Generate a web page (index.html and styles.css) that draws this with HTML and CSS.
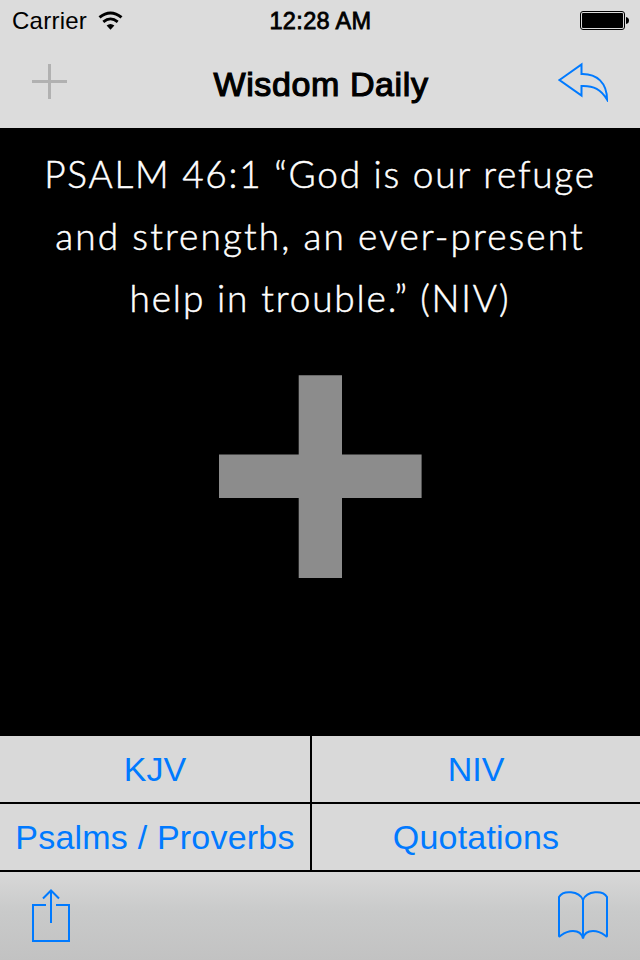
FILE: index.html
```html
<!DOCTYPE html>
<html lang="en">
<head>
  <meta charset="UTF-8">
  <meta name="viewport" content="width=device-width, initial-scale=1">
  <title>Wisdom Daily</title>
  <link rel="stylesheet" href="styles.css">
</head>
<body>
  <div class="app">
    <div class="status-bar">
      <div class="network">
        <span class="carrier">Carrier</span>
        <svg class="wifi" width="26" height="20" viewBox="0 0 26 20">
          <path d="M1.5 6.4Q12.5 -2.5 23.5 6.4" fill="none" stroke="#000" stroke-width="3"/>
          <path d="M5.3 10.9Q12.5 4.8 19.7 10.9" fill="none" stroke="#000" stroke-width="2.8"/>
          <path d="M8.6 14.6Q12.5 11.5 16.4 14.6L12.5 18.8Z"/>
        </svg>
      </div>
      <span class="time">12:28 AM</span>
      <svg class="battery" width="50" height="20" viewBox="0 0 50 20">
        <rect x="0.5" y="0.5" width="44" height="18" rx="2.5" fill="none" stroke="#000"/>
        <rect x="2" y="2" width="41" height="15" rx="1"/>
        <path d="M46 6Q49 6.5 49 9.5Q49 12.5 46 13Z"/>
      </svg>
    </div>

    <header class="nav-bar">
      <button class="icon-button" disabled aria-label="Add">
        <svg width="35" height="35" viewBox="0 0 35 35">
          <path d="M16 0h3v16h16v3H19v16h-3V19H0v-3h16z" fill="#b1b1b1"/>
        </svg>
      </button>
      <h1>Wisdom Daily</h1>
      <button class="icon-button" aria-label="Back">
        <svg width="52" height="40" viewBox="0 0 52 40">
          <path d="M1.5 18L23.5 2.5V12C39 11.5 49 21 49 37.5C43 27.5 36 23.5 23.5 24V33.5Z"/>
        </svg>
      </button>
    </header>

    <main class="content">
      <p class="verse">
        <span class="line first">PSALM 46:1 “God is our refuge</span>
        <span class="line second">and strength, an ever-present</span>
        <span class="line third">help in trouble.” (NIV)</span>
      </p>
      <svg class="plus" width="203" height="203" viewBox="0 0 203 203">
        <path d="M79.7 0.3H123V79.4H202.6V123H123V203H79.7V123H0V79.4H79.7Z" fill="#8c8c8c"/>
      </svg>
    </main>

    <div class="sources">
      <button>KJV</button>
      <button>NIV</button>
      <button class="wide">Psalms / Proverbs</button>
      <button class="wide">Quotations</button>
    </div>

    <footer class="toolbar">
      <button class="icon-button" aria-label="Share">
        <svg width="38" height="54" viewBox="0 0 38 54">
          <path d="M14 16H1V52H37V16H24M19 34V2M11 9.5L19 1.5L27 9.5"/>
        </svg>
      </button>
      <button class="icon-button book" aria-label="Bookmarks">
        <svg width="50" height="50" viewBox="0 0 50 50">
          <path d="M25 47.500V9C21 -0.500 5 -1 1 6V45C2 47 5 40 15 40C21 40 24 43 25 47.500C26 43 29 40 35 40C45 40 48 47 49 45V6C45 -1 29 -0.500 25 9"/>
        </svg>
      </button>
    </footer>
  </div>
</body>
</html>
```
FILE: styles.css
```css
* { box-sizing: border-box; }
body {
  margin: 0;
  background: #000;
  font-family: "Helvetica Neue", "Liberation Sans", Arial, sans-serif;
}
.app {
  width: 640px;
  height: 960px;
  display: flex;
  flex-direction: column;
}
svg {
  display: block;
}
button {
  margin: 0;
  padding: 0;
  border: none;
  background: none;
  font-family: inherit;
  color: #007aff;
  cursor: pointer;
}
.icon-button svg {
  fill: none;
  stroke: #007aff;
  stroke-width: 2;
}
.icon-button:disabled svg {
  stroke: none;
}
.status-bar {
  height: 40px;
  padding: 0 11px 0 12px;
  display: grid;
  grid-template-columns: 1fr auto 1fr;
  align-items: center;
  background: #dcdcdc;
  font-size: 24px;
}
.network {
  display: flex;
  align-items: center;
  gap: 11px;
}
.carrier {
  margin-top: 1px;
  letter-spacing: 0.25px;
}
.wifi {
  margin-top: 1px;
}
.time {
  margin-top: 2px;
  font-size: 23.5px;
  letter-spacing: 0.35px;
  -webkit-text-stroke: 0.8px #000;
}
.battery {
  justify-self: end;
  margin-top: 2px;
  margin-right: -1px;
}
.nav-bar {
  height: 88px;
  padding: 0 30px 5px 32px;
  display: grid;
  grid-template-columns: 52px 1fr 52px;
  align-items: center;
  background: #dcdcdc;
}
.nav-bar h1 {
  margin: 6px 0 0;
  font-size: 34px;
  font-weight: normal;
  letter-spacing: 0.6px;
  text-align: center;
  -webkit-text-stroke: 1.2px #000;
}
.content {
  height: 608px;
  display: flex;
  flex-direction: column;
  align-items: center;
  background: #000;
}
.verse {
  margin: 15px 0 0;
  color: #fff;
  font-family: Papyrus, Lato, sans-serif;
  font-size: 37px;
  font-weight: 300;
  line-height: 62px;
  text-align: center;
  -webkit-text-stroke: 0.5px #fff;
}
.line {
  display: block;
  white-space: nowrap;
}
.first {
  letter-spacing: 1.75px;
}
.second {
  letter-spacing: 2.1px;
}
.third {
  letter-spacing: 1.85px;
}
.plus {
  margin-top: 46px;
}
.sources {
  height: 136px;
  padding-bottom: 2px;
  display: grid;
  grid-template-columns: 310px 328px;
  grid-template-rows: 66px 66px;
  gap: 2px;
  background: #000;
}
.sources button {
  background: #d9d9d9;
  font-size: 34px;
}
.sources .wide {
  letter-spacing: 0.2px;
}
.toolbar {
  height: 88px;
  padding: 17px 32px 0;
  display: flex;
  justify-content: space-between;
  align-items: flex-start;
  background: linear-gradient(#d8d8d8, #c9caca 45%, #c2c2c2);
}
.toolbar .book {
  margin-top: 2px;
}
```
